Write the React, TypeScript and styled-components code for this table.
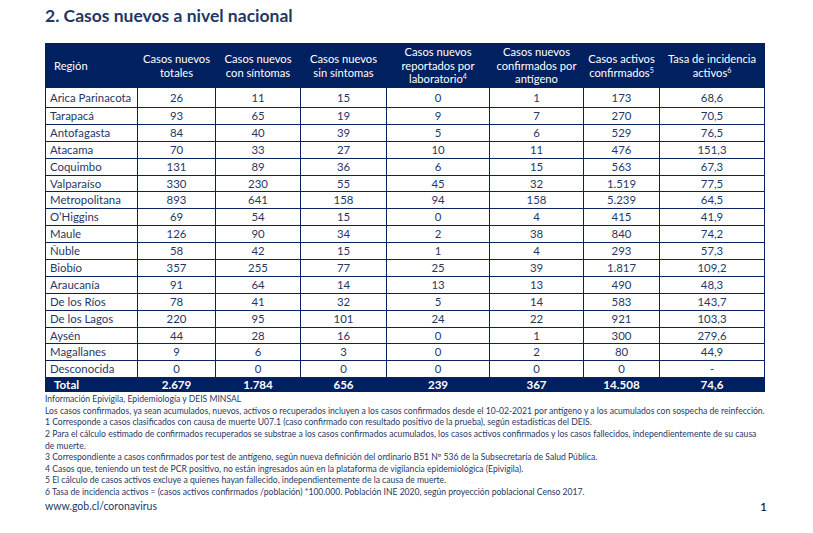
import React from "react";
import styled, { createGlobalStyle } from "styled-components";

const Global = createGlobalStyle`
  html, body { margin: 0; padding: 0; background: #ffffff; }
  body { font-family: Lato, "Open Sans", sans-serif; }
`;

const Page = styled.div`
  width: 813px;
  height: 533px;
  box-sizing: border-box;
  padding: 4px 49px 0 45px;
  display: flex;
  flex-direction: column;
  color: #1f3864;
  position: relative;
`;

const Title = styled.h2`
  margin: 0;
  font-family: Lato, sans-serif;
  font-weight: 700;
  font-size: 17.5px;
  line-height: 24px;
  color: #1f3864;
`;

const Table = styled.table`
  margin-top: 15px;
  width: 719px;
  border-collapse: collapse;
  table-layout: fixed;
  font-family: Lato, sans-serif;
`;

const HeadRow = styled.tr`
  height: 44px;
  background: #002060;
`;

const Th = styled.th<{ $left?: boolean }>`
  color: #ffffff;
  font-weight: 400;
  font-size: 11.2px;
  line-height: 13.5px;
  padding: 0 ${(p) => (p.$left ? "8px" : "2px")};
  text-align: ${(p) => (p.$left ? "left" : "center")};
  vertical-align: middle;
  border: 1px solid #002060;
  sup { font-size: 7px; line-height: 0; vertical-align: 4px; }
`;

const BodyRow = styled.tr<{ $h: number }>`
  height: ${(p) => p.$h}px;
`;

const Td = styled.td<{ $left?: boolean }>`
  font-size: 11.4px;
  line-height: 14px;
  padding: 0 ${(p) => (p.$left ? "4px" : "2px")};
  text-align: ${(p) => (p.$left ? "left" : "center")};
  border: 1px solid #0c2260;
  color: #1f3864;
  white-space: nowrap;
`;

const TotalRow = styled.tr`
  height: 14px;
  background: #002060;
`;

const TotalTd = styled.td<{ $left?: boolean }>`
  font-size: 11.6px;
  line-height: 13px;
  font-weight: 700;
  color: #ffffff;
  padding: 0 ${(p) => (p.$left ? "8px" : "2px")};
  text-align: ${(p) => (p.$left ? "left" : "center")};
  border: 1px solid #002060;
`;

const Notes = styled.div`
  margin-top: 2px;
  display: flex;
  flex-direction: column;
  font-size: 8.6px;
  line-height: 11.6px;
  color: #1f3864;
  white-space: nowrap;
`;

const Url = styled.div`
  margin-top: 0;
  font-size: 10.5px;
  line-height: 14px;
  color: #1f3864;
`;

const PageNum = styled.div`
  position: absolute;
  right: 46px;
  top: 499px;
  font-size: 12px;
  line-height: 16px;
  color: #000000;
`;

const widths = [92, 78, 85, 86, 103, 94, 76, 105];

const rows: [string, string, string, string, string, string, string, string][] = [
  ["Arica Parinacota", "26", "11", "15", "0", "1", "173", "68,6"],
  ["Tarapacá", "93", "65", "19", "9", "7", "270", "70,5"],
  ["Antofagasta", "84", "40", "39", "5", "6", "529", "76,5"],
  ["Atacama", "70", "33", "27", "10", "11", "476", "151,3"],
  ["Coquimbo", "131", "89", "36", "6", "15", "563", "67,3"],
  ["Valparaíso", "330", "230", "55", "45", "32", "1.519", "77,5"],
  ["Metropolitana", "893", "641", "158", "94", "158", "5.239", "64,5"],
  ["O’Higgins", "69", "54", "15", "0", "4", "415", "41,9"],
  ["Maule", "126", "90", "34", "2", "38", "840", "74,2"],
  ["Ñuble", "58", "42", "15", "1", "4", "293", "57,3"],
  ["Biobío", "357", "255", "77", "25", "39", "1.817", "109,2"],
  ["Araucanía", "91", "64", "14", "13", "13", "490", "48,3"],
  ["De los Ríos", "78", "41", "32", "5", "14", "583", "143,7"],
  ["De los Lagos", "220", "95", "101", "24", "22", "921", "103,3"],
  ["Aysén", "44", "28", "16", "0", "1", "300", "279,6"],
  ["Magallanes", "9", "6", "3", "0", "2", "80", "44,9"],
  ["Desconocida", "0", "0", "0", "0", "0", "0", "-"],
];

const totals = ["Total", "2.679", "1.784", "656", "239", "367", "14.508", "74,6"];

const notes = [
  "Información Epivigila, Epidemiología y DEIS MINSAL",
  "Los casos confirmados, ya sean acumulados, nuevos, activos o recuperados incluyen a los casos confirmados desde el 10-02-2021 por antígeno y a los acumulados con sospecha de reinfección.",
  "1 Corresponde a casos clasificados con causa de muerte U07.1 (caso confirmado con resultado positivo de la prueba), según estadísticas del DEIS.",
  "2 Para el cálculo estimado de confirmados recuperados se substrae a los casos confirmados acumulados, los casos activos confirmados y los casos fallecidos, independientemente de su causa",
  "de muerte.",
  "3 Correspondiente a casos confirmados por test de antígeno, según nueva definición del ordinario B51 Nº 536 de la Subsecretaría de Salud Pública.",
  "4 Casos que, teniendo un test de PCR positivo, no están ingresados aún en la plataforma de vigilancia epidemiológica (Epivigila).",
  "5 El cálculo de casos activos excluye a quienes hayan fallecido, independientemente de la causa de muerte.",
  "6 Tasa de incidencia activos = (casos activos confirmados /población) *100.000. Población INE 2020, según proyección poblacional Censo 2017.",
];

export default function App() {
  return (
    <>
      <Global />
      <Page>
        <Title>2. Casos nuevos a nivel nacional</Title>
        <Table>
          <colgroup>
            {widths.map((w, i) => (
              <col key={i} style={{ width: w }} />
            ))}
          </colgroup>
          <thead>
            <HeadRow>
              <Th $left>Región</Th>
              <Th>Casos nuevos<br />totales</Th>
              <Th>Casos nuevos<br />con síntomas</Th>
              <Th>Casos nuevos<br />sin síntomas</Th>
              <Th>Casos nuevos<br />reportados por<br />laboratorio<sup>4</sup></Th>
              <Th>Casos nuevos<br />confirmados por<br />antígeno</Th>
              <Th>Casos activos<br />confirmados<sup>5</sup></Th>
              <Th>Tasa de incidencia<br />activos<sup>6</sup></Th>
            </HeadRow>
          </thead>
          <tbody>
            {rows.map((r, i) => (
              <BodyRow key={r[0]} $h={i === 0 ? 20 : 16.9}>
                {r.map((c, j) => (
                  <Td key={j} $left={j === 0}>{c}</Td>
                ))}
              </BodyRow>
            ))}
            <TotalRow>
              {totals.map((c, j) => (
                <TotalTd key={j} $left={j === 0}>{c}</TotalTd>
              ))}
            </TotalRow>
          </tbody>
        </Table>
        <Notes>
          {notes.map((n, i) => (
            <div key={i}>{n}</div>
          ))}
        </Notes>
        <Url>www.gob.cl/coronavirus</Url>
        <PageNum>1</PageNum>
      </Page>
    </>
  );
}
